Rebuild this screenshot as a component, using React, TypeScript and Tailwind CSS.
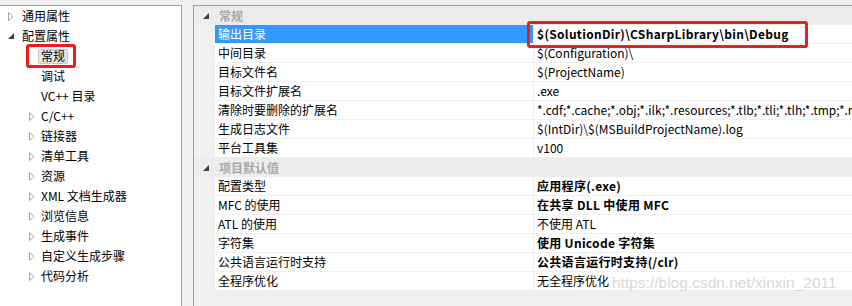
import type { ReactNode } from "react";

const FONT = {
  fontFamily: '"Noto Sans CJK SC", "Microsoft YaHei", sans-serif',
};

// Tree node definitions for the left side.
const TREE: { label: string; level: 0 | 1; state: "open" | "closed" | "leaf"; selected?: boolean }[] = [
  { label: "通用属性", level: 0, state: "closed" },
  { label: "配置属性", level: 0, state: "open" },
  { label: "常规", level: 1, state: "leaf", selected: true },
  { label: "调试", level: 1, state: "leaf" },
  { label: "VC++ 目录", level: 1, state: "leaf" },
  { label: "C/C++", level: 1, state: "closed" },
  { label: "链接器", level: 1, state: "closed" },
  { label: "清单工具", level: 1, state: "closed" },
  { label: "资源", level: 1, state: "closed" },
  { label: "XML 文档生成器", level: 1, state: "closed" },
  { label: "浏览信息", level: 1, state: "closed" },
  { label: "生成事件", level: 1, state: "closed" },
  { label: "自定义生成步骤", level: 1, state: "closed" },
  { label: "代码分析", level: 1, state: "closed" },
];

type Row =
  | { kind: "header"; label: string }
  | { kind: "prop"; name: string; value: string; bold?: boolean; selected?: boolean; marked?: boolean };

const ROWS: Row[] = [
  { kind: "header", label: "常规" },
  { kind: "prop", name: "输出目录", value: "$(SolutionDir)\\CSharpLibrary\\bin\\Debug", bold: true, selected: true, marked: true },
  { kind: "prop", name: "中间目录", value: "$(Configuration)\\" },
  { kind: "prop", name: "目标文件名", value: "$(ProjectName)" },
  { kind: "prop", name: "目标文件扩展名", value: ".exe" },
  {
    kind: "prop",
    name: "清除时要删除的扩展名",
    value: "*.cdf;*.cache;*.obj;*.ilk;*.resources;*.tlb;*.tli;*.tlh;*.tmp;*.rsp;*.pgc;*.pgd;*.meta",
  },
  { kind: "prop", name: "生成日志文件", value: "$(IntDir)\\$(MSBuildProjectName).log" },
  { kind: "prop", name: "平台工具集", value: "v100" },
  { kind: "header", label: "项目默认值" },
  { kind: "prop", name: "配置类型", value: "应用程序(.exe)", bold: true },
  { kind: "prop", name: "MFC 的使用", value: "在共享 DLL 中使用 MFC", bold: true },
  { kind: "prop", name: "ATL 的使用", value: "不使用 ATL" },
  { kind: "prop", name: "字符集", value: "使用 Unicode 字符集", bold: true },
  { kind: "prop", name: "公共语言运行时支持", value: "公共语言运行时支持(/clr)", bold: true },
  { kind: "prop", name: "全程序优化", value: "无全程序优化" },
];

function Closed() {
  return (
    <svg width="6" height="9" viewBox="0 0 6 9" className="shrink-0">
      <path d="M0.5 0.5 L5 4.5 L0.5 8.5 Z" fill="none" stroke="#a6a6a6" strokeWidth="1" />
    </svg>
  );
}

function Open() {
  return (
    <svg width="6" height="6" viewBox="0 0 6 6" className="shrink-0">
      <path d="M6 0 L6 6 L0 6 Z" fill="#404040" />
    </svg>
  );
}

function TreeRow({ item }: { item: (typeof TREE)[number] }) {
  const indent = item.level === 0 ? "pl-[8px]" : "pl-[29px]";
  let icon: ReactNode = <span className="w-[6px]" />;
  if (item.state === "closed") icon = <Closed />;
  if (item.state === "open") icon = <Open />;
  return (
    <div className={`flex h-[20px] items-center ${indent}`}>
      <span className="flex w-[8px] items-center">{icon}</span>
      {item.selected ? (
        <span className="relative ml-[1px] flex h-[15px] items-center rounded-[2px] border border-[#c8c8c8] bg-[#e6e6e6] px-[2px] text-black">
          {item.label}
          <span className="pointer-events-none absolute -top-[6px] -left-[13px] -right-[9px] -bottom-[5px] z-10 rounded-[3px] border-[3px] border-[#ee1c1c]" />
        </span>
      ) : (
        <span className={item.level === 0 ? "ml-[6px]" : "ml-[4px]"}>{item.label}</span>
      )}
    </div>
  );
}

function PropRow({ row }: { row: Row }) {
  if (row.kind === "header") {
    return (
      <div className="flex h-[19px] items-center bg-[#ececec]">
        <span className="flex w-[21px] items-center justify-center pl-[2px]">
          <Open />
        </span>
        <span className="pl-[4px] font-bold text-[#a8a8a8]">{row.label}</span>
      </div>
    );
  }
  return (
    <div className="relative flex h-[19px] bg-[#f0f0f0]">
      <span className="w-[21px] shrink-0" />
      <div
        className={`flex w-[318px] shrink-0 items-center border-b border-[#f0f0f0] pl-[3px] ${
          row.selected ? "bg-[#3399ff] text-white" : "bg-white text-black"
        }`}
      >
        {row.name}
      </div>
      <div className="flex min-w-0 flex-1 items-center overflow-hidden border-b border-l border-[#f0f0f0] bg-white pl-[3px]">
        <span className={`whitespace-nowrap ${row.bold ? "font-bold tracking-[0.3px]" : ""}`}>{row.value}</span>
      </div>
      {row.marked ? (
        <span className="pointer-events-none absolute top-[-4px] left-[333px] z-10 h-[27px] w-[281px] rounded-[3px] border-[3px] border-[#ee1c1c]" />
      ) : null}
    </div>
  );
}

export default function App() {
  return (
    <div
      className="relative flex h-[306px] w-[852px] overflow-hidden bg-[#f0f0f0] pt-[5px] text-[12px] text-black"
      style={FONT}
    >
      <div className="w-[182px] shrink-0 border-t border-r border-[#a0a0a0] bg-white">
        {TREE.map((t) => (
          <TreeRow key={t.label} item={t} />
        ))}
      </div>
      <div className="ml-[11px] min-w-0 flex-1 border-t border-l border-[#a0a0a0] bg-[#f0f0f0]">
        {ROWS.map((r, i) => (
          <PropRow key={i} row={r} />
        ))}
      </div>
      <div
        className="pointer-events-none absolute top-[271px] left-[612px] z-20 text-[15.5px] text-[#d4d4d4] opacity-90"
        style={{ fontFamily: '"Liberation Sans", Arial, sans-serif' }}
      >
        https://blog.csdn.net/xinxin_2011
      </div>
    </div>
  );
}
